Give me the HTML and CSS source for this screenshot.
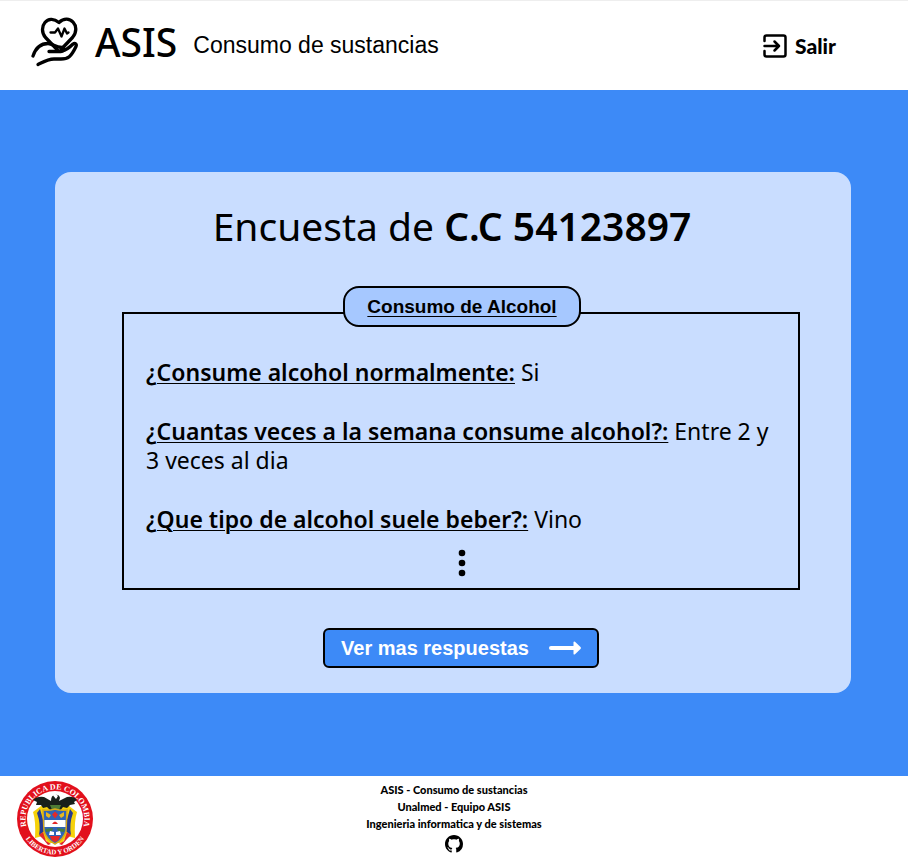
FILE: index.html
```html
<!DOCTYPE html>
<html lang="es">
<head>
<meta charset="utf-8">
<meta name="viewport" content="width=device-width, initial-scale=1">
<title>ASIS - Consumo de sustancias</title>
<link rel="stylesheet" href="styles.css">
</head>
<body>
<header class="header">
  <div class="brand">
    <svg class="brand-logo" viewBox="0 0 48 52" fill="none" stroke="#000" stroke-width="3.300" stroke-linecap="round" stroke-linejoin="round" aria-hidden="true">
      <path d="M26.500 34L14.500 21.500C6 11 17 -3 28 6.500C38 -3 51 10 41.500 21.500L30 33.500"/>
      <path stroke-width="2.300" d="M19.500 16.500h4.500l3-4 3.500 8 3-8 2.500 5 1.500-1"/>
      <path d="M2 40C5 31 11 27.500 17 27.500C22 27.500 24 31.500 31 31.500C34 32 33 35.500 30 35.500H18"/>
      <path d="M31 35C36 34 40 30 42 28C44 26.500 46 28 45 30.500C40 41 37 43 30 43H23C17 43 12 46 7 48.500"/>
    </svg>
    <span class="brand-name">ASIS</span>
    <span class="brand-section">Consumo de sustancias</span>
  </div>
  <a class="logout" href="#">
    <svg class="logout-icon" viewBox="0 0 24 24" fill="none" stroke="#000" stroke-width="2.500" stroke-linecap="round" stroke-linejoin="round" aria-hidden="true">
      <path d="M1.500 7V3.500Q1.500 1.500 3.500 1.500H20.500Q22.500 1.500 22.500 3.500V20.500Q22.500 22.500 20.500 22.500H3.500Q1.500 22.500 1.500 20.500V17"/>
      <path d="M1.500 12H16M11.500 7.500L16 12l-4.500 4.500"/>
    </svg>
    Salir
  </a>
</header>
<main class="main">
  <article class="card">
    <h1 class="title">Encuesta de <strong>C.C 54123897</strong></h1>
    <section class="survey">
      <h2 class="survey-tag">Consumo de Alcohol</h2>
      <div class="answers">
        <p><strong>¿Consume alcohol normalmente:</strong> Si</p>
        <p><strong>¿Cuantas veces a la semana consume alcohol?:</strong> Entre 2 y 3 veces al dia</p>
        <p><strong>¿Que tipo de alcohol suele beber?:</strong> Vino</p>
      </div>
      <svg class="dots" viewBox="0 0 8 28" aria-hidden="true"><circle cx="4" cy="4" r="3.300"/><circle cx="4" cy="14" r="3.300"/><circle cx="4" cy="24" r="3.300"/></svg>
    </section>
    <button class="more" type="button">
      Ver mas respuestas
      <svg class="arrow" viewBox="0 0 32 14" fill="#fff" aria-hidden="true"><rect x="0" y="5" width="28" height="4" rx="2"/><path d="M24.500 1Q25 0 26 .8L31.500 6Q32.300 7 31.500 8L26 13.200Q25 14 24.500 13Z"/></svg>
    </button>
  </article>
</main>
<footer class="footer">
  <svg class="seal" viewBox="0 0 76 76" role="img" aria-label="Escudo de Colombia">
    <defs>
      <path id="arc-top" d="M14.800 56.200A29.500 29.500 0 1 1 61.200 56.200"/>
      <path id="arc-bottom" d="M2.600 38A35.400 35.400 0 0 0 73.400 38"/>
    </defs>
    <circle cx="38" cy="38" r="38" fill="#e2101c"/>
    <circle cx="38" cy="38" r="28" fill="#fff"/>
    <g class="seal-text">
      <text><textPath href="#arc-top" startOffset="50%" text-anchor="middle">REPUBLICA DE COLOMBIA</textPath></text>
      <text class="seal-motto"><textPath href="#arc-bottom" startOffset="50%" text-anchor="middle">LIBERTAD Y ORDEN</textPath></text>
    </g>
    <path fill="#f6d20a" d="M24 25L16 31Q19 40 18 57L26 55L31 62H45L50 55L58 57Q57 40 60 31L52 25Z"/>
    <path fill="#263b91" d="M23 28L20 32Q24 43 22 54L29 49ZM53 28L56 32Q52 43 54 54L47 49Z"/>
    <path fill="#e32929" d="M22 54L26 51L29 60L34 63L31 64L26 58ZM54 54L50 51L47 60L42 63L45 64L50 58Z"/>
    <path fill="#18201a" d="M16 19Q20 15 27 16L34 20Q34 14 38 14Q42 13 43 17L42 20L50 16Q57 15 60 19L57 21L58 23L53 24L50 27L46 26L43 30H34L30 26L26 27L24 24L19 24L20 21Z"/>
    <path fill="#fff" d="M36 14.500Q39 12 41 15L39 18Z"/>
    <path fill="#4d7c35" d="M33 24H44L42 29H35Z"/>
    <path fill="#2f65b8" stroke="#d7a919" stroke-width="1.500" d="M26 29Q32 30 38 28Q44 30 50 29L49 50Q47 58 38 63Q29 58 27 50Z"/>
    <path fill="#fff" d="M27.500 39H48.500V46H27.500Z"/>
    <path fill="#e9b81e" d="M29 31L34 34L32 37L29 35ZM47 31L42 34L44 37L47 35Z"/>
    <path fill="#e32929" d="M38 30.500l3 3-3 4-3-4zM35 43q3-5 6 0z"/>
    <path fill="#427c43" d="M28.500 48L36 47L35 50L29 51ZM47.500 48L40 47L41 50L47 51Z"/>
    <path fill="#fff" d="M33 50l4 1v3h-5zM43 50l-4 1v3h5z"/>
    <path fill="#e32929" d="M33 55h10q-1 5-5 6q-4-1-5-6z"/>
  </svg>
  <div class="credits">
    <span>ASIS - Consumo de sustancias</span>
    <span>Unalmed - Equipo ASIS</span>
    <span>Ingenieria informatica y de sistemas</span>
    <a class="github" href="#" aria-label="GitHub"><svg viewBox="0 0 16 16" aria-hidden="true"><path d="M8 0C3.580 0 0 3.580 0 8c0 3.540 2.290 6.530 5.470 7.590.4.070.55-.17.55-.38 0-.19-.01-.82-.01-1.490-2.010.37-2.530-.49-2.690-.94-.09-.23-.48-.94-.82-1.130-.28-.15-.68-.52-.01-.53.63-.01 1.080.58 1.230.82.72 1.210 1.870.87 2.330.66.07-.52.28-.87.51-1.070-1.780-.2-3.640-.89-3.640-3.950 0-.87.31-1.590.82-2.150-.08-.2-.36-1.020.08-2.120 0 0 .67-.21 2.200.82.64-.18 1.320-.27 2-.27s1.360.09 2 .27c1.530-1.040 2.200-.82 2.200-.82.44 1.100.16 1.920.08 2.120.51.56.82 1.270.82 2.150 0 3.070-1.870 3.750-3.650 3.950.29.25.54.73.54 1.480 0 1.070-.01 1.930-.01 2.200 0 .21.15.46.55.38A8.010 8.010 0 0 0 16 8c0-4.420-3.580-8-8-8z"/></svg></a>
  </div>
</footer>
</body>
</html>
```

FILE: styles.css
```css
* { box-sizing: border-box; }

body {
  margin: 0;
  min-height: 100vh;
  display: flex;
  flex-direction: column;
  background: #fff;
  color: #000;
  font-family: "Noto Sans", "Open Sans", sans-serif;
}

h1, h2, p { margin: 0; }
svg { display: block; flex: none; }

.header {
  min-height: 90px;
  padding: 0 72px 0 31px;
  border-top: 1px solid #eee;
  display: flex;
  align-items: center;
  justify-content: space-between;
}
.brand { display: flex; align-items: center; gap: 16px; }
.brand-logo { width: 48px; height: 52px; margin-bottom: 8px; }
.brand-name { font-size: 39px; line-height: 48px; font-weight: 500; margin-bottom: 8px; }
.brand-section { font-family: "Liberation Sans", Arial, sans-serif; font-size: 23px; }
.logout {
  display: flex;
  align-items: center;
  gap: 8px;
  color: inherit;
  text-decoration: none;
  font-family: Lato, sans-serif;
  font-weight: 900;
  font-size: 21px;
}
.logout-icon { width: 24px; height: 24px; }

.main { flex: 1; padding: 82px 57px 82px 55px; background: #3d8af7; }
.card {
  padding: 26px 51px 25px 67px;
  border-radius: 16px;
  background: #c9ddff;
  display: flex;
  flex-direction: column;
}
.title {
  margin-right: 18px;
  font-size: 39px;
  line-height: 56px;
  font-weight: 400;
  text-align: center;
}
.title strong { font-weight: 600; }
.survey {
  margin-top: 58px;
  padding: 0 20px 11px 22px;
  border: 2px solid #000;
  display: flex;
  flex-direction: column;
}
.survey-tag {
  align-self: center;
  margin-top: -28px;
  padding: 0 22px;
  border: 2px solid #000;
  border-radius: 16px;
  background: #a6c8ff;
  font-family: "Liberation Sans", Arial, sans-serif;
  font-size: 19px;
  line-height: 37px;
  text-decoration: underline 1px;
  text-underline-offset: 3px;
}
.answers {
  margin-top: 31px;
  display: flex;
  flex-direction: column;
  gap: 30px;
  font-size: 23px;
  line-height: 29px;
}
.answers strong {
  font-weight: 600;
  text-decoration: underline 1px;
  text-underline-offset: 2px;
}
.dots { align-self: center; width: 8px; height: 28px; margin-top: 15px; }

.more {
  align-self: center;
  margin-top: 38px;
  height: 40px;
  padding: 0 16px;
  border: 2px solid #000;
  border-radius: 6px;
  background: #3d8af7;
  color: #fff;
  display: flex;
  align-items: center;
  gap: 20px;
  font-family: "Liberation Sans", Arial, sans-serif;
  font-size: 20px;
  font-weight: 700;
}
.arrow { width: 32px; height: 14px; }

.footer {
  min-height: 87px;
  padding: 5px 17px;
  display: grid;
  grid-template-columns: 76px 1fr 76px;
}
.seal { width: 76px; height: 76px; }
.seal-text { fill: #fff; font-family: "Liberation Serif", serif; font-size: 8px; font-weight: 700; }
.seal-motto { font-size: 7px; }
.credits {
  display: flex;
  flex-direction: column;
  align-items: center;
  font-family: Lato, sans-serif;
  font-size: 11px;
  font-weight: 900;
  line-height: 17px;
}
.github { margin-top: 3px; }
.github svg { width: 18px; height: 18px; }
```
